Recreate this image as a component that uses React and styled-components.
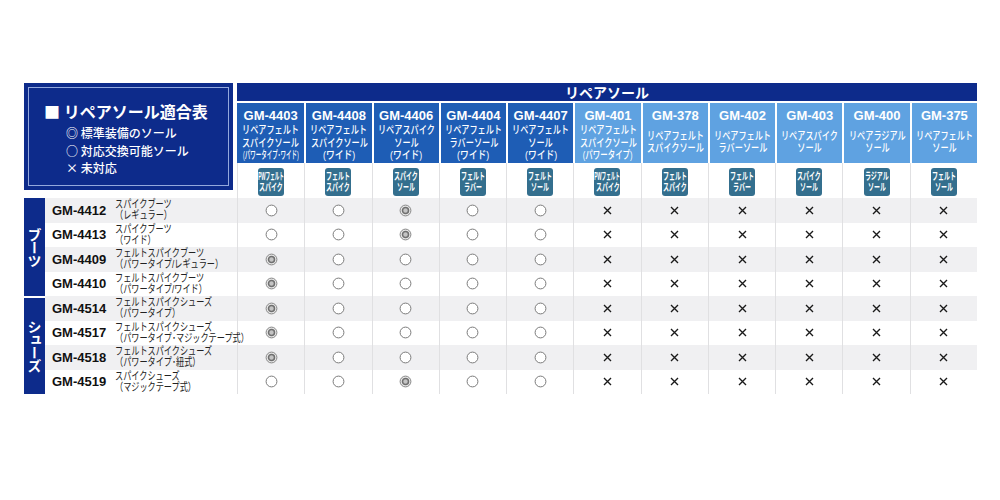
import React from "react";
import styled, { createGlobalStyle } from "styled-components";

const GlobalStyle = createGlobalStyle`
    body {
        margin: 0;
        background: white;
        font-family: "Liberation Sans", "Noto Sans CJK JP", sans-serif;
    }
`

const navy = "#0d2b8b";
const midBlue = "#1e5db5";
const lightBlue = "#5fa2e1";
const badgeColor = "#346f8e";
const rowGray = "#f0f0f2";
const lineGray = "#e0e0e2";

const Page = styled.div`
    padding: 83px 23px 0 24px;
`
const Table = styled.div`
    display: grid;
    width: 953px;
    grid-template-columns: 21px 192px repeat(11, 1fr);
    grid-template-rows: 20px 60px 35px repeat(8, 24.5px);
`
const Legend = styled.div`
    grid-column: 1 / 3;
    grid-row: 1 / 4;
    margin: 0 4px 8px 0;
    background: ${navy};
    padding: 4px;
    color: white;
`
const LegendInner = styled.div`
    height: 100%;
    box-sizing: border-box;
    border: 1px solid #93a8dc;
    padding: 13px 0 0 15px;
`
const LegendTitle = styled.div`
    font-family: "Noto Sans CJK JP", sans-serif;
    font-size: 16px;
    font-weight: 700;
    line-height: 20px;
    margin-bottom: 3px;
    white-space: nowrap;
`
const LegendItem = styled.div`
    font-family: "Noto Sans CJK JP", sans-serif;
    font-size: 12px;
    font-weight: 500;
    line-height: 17.5px;
    padding-left: 22px;
    white-space: nowrap;
`
const TopBar = styled.div`
    grid-column: 3 / -1;
    grid-row: 1;
    margin-bottom: 2px;
    background: ${navy};
    color: white;
    display: flex;
    align-items: center;
    justify-content: center;
    font-family: "Noto Sans CJK JP", sans-serif;
    font-size: 14px;
    font-weight: 700;
`
const HeadCell = styled.div`
    grid-row: 2;
    background: ${props => props.$light ? lightBlue : midBlue};
    border-left: ${props => props.$first ? "none" : "2px solid white"};
    color: white;
    display: flex;
    flex-direction: column;
    align-items: center;
    padding-top: 5px;
    box-sizing: border-box;
    overflow: hidden;
`
const Code = styled.div`
    font-size: 13px;
    font-weight: 700;
    line-height: 16px;
`
const SubBlock = styled.div`
    flex: 1;
    display: flex;
    flex-direction: column;
    align-items: center;
    justify-content: center;
    padding-bottom: 3px;
`
const SubLine = styled.span`
    display: block;
    font-family: "Liberation Sans", "Noto Sans CJK JP", sans-serif;
    font-size: 11px;
    font-weight: 500;
    line-height: 12.5px;
    white-space: nowrap;
    transform: scaleX(${props => props.$sx || 0.74});
`
const BadgeCell = styled.div`
    grid-row: 3;
    border-left: 1px solid ${lineGray};
    display: flex;
    align-items: center;
    justify-content: center;
    padding-top: 3px;
`
const Badge = styled.div`
    width: 26px;
    height: 28px;
    border-radius: 3px;
    background: ${badgeColor};
    color: white;
    display: flex;
    flex-direction: column;
    align-items: center;
    justify-content: center;
`
const BadgeLine = styled.span`
    display: block;
    font-family: "Liberation Sans", "Noto Sans CJK JP", sans-serif;
    font-size: 10px;
    font-weight: 700;
    line-height: 11.5px;
    white-space: nowrap;
    transform: scaleX(${props => props.$sx || 0.6});
`
const Category = styled.div`
    grid-column: 1;
    grid-row: ${props => props.$row} / span 4;
    margin-top: ${props => props.$gap ? "2px" : "0"};
    background: ${navy};
    color: white;
    display: flex;
    align-items: center;
    justify-content: center;
`
const CategoryText = styled.span`
    writing-mode: vertical-rl;
    text-orientation: upright;
    font-family: "Noto Sans CJK JP", sans-serif;
    font-size: 14px;
    font-weight: 700;
    line-height: 1;
    letter-spacing: -1px;
`
const ModelCell = styled.div`
    grid-column: 2;
    background: ${props => props.$odd ? rowGray : "white"};
    display: flex;
    align-items: center;
    padding-left: 7px;
`
const ModelCode = styled.span`
    width: 63px;
    flex-shrink: 0;
    font-size: 13px;
    font-weight: 700;
    color: #111;
`
const ModelDesc = styled.div`
    display: flex;
    flex-direction: column;
    color: #222;
`
const DescLine = styled.span`
    display: block;
    font-family: "Liberation Sans", "Noto Sans CJK JP", sans-serif;
    font-size: 11px;
    line-height: 11px;
    white-space: nowrap;
    transform: scaleX(0.74);
    transform-origin: left center;
`
const Cell = styled.div`
    background: ${props => props.$odd ? rowGray : "white"};
    border-left: 1px solid ${lineGray};
    display: flex;
    align-items: center;
    justify-content: center;
`

const Ring = () => (
    <svg width="13" height="13" viewBox="0 0 13 13">
        <circle cx="6.5" cy="6.5" r="5.4" fill="white" stroke="#7c7c7c" strokeWidth="1" />
    </svg>
);

const DoubleRing = () => (
    <svg width="13" height="13" viewBox="0 0 13 13">
        <circle cx="6.5" cy="6.5" r="5.4" fill="#e6e6e6" stroke="#888" strokeWidth="1" />
        <circle cx="6.5" cy="6.5" r="3" fill="#c4c4c4" stroke="#6f6f6f" strokeWidth="1.5" />
    </svg>
);

const Cross = () => (
    <svg width="13" height="13" viewBox="0 0 13 13">
        <path d="M3 3 L10 10 M10 3 L3 10" stroke="#1a1a1a" strokeWidth="1.35" />
    </svg>
);

const columns = [
    { code: "GM-4403", lines: [["リペアフェルト"], ["スパイクソール"], ["(パワータイプ･ワイド)", 0.5]], badge: [["PWフェルト", 0.46], ["スパイク"]] },
    { code: "GM-4408", lines: [["リペアフェルト"], ["スパイクソール"], ["(ワイド)", 0.8]], badge: [["フェルト"], ["スパイク"]] },
    { code: "GM-4406", lines: [["リペアスパイク"], ["ソール"], ["(ワイド)", 0.8]], badge: [["スパイク"], ["ソール"]] },
    { code: "GM-4404", lines: [["リペアフェルト"], ["ラバーソール"], ["(ワイド)", 0.8]], badge: [["フェルト"], ["ラバー"]] },
    { code: "GM-4407", lines: [["リペアフェルト"], ["ソール"], ["(ワイド)", 0.8]], badge: [["フェルト"], ["ソール"]] },
    { code: "GM-401", light: true, lines: [["リペアフェルト"], ["スパイクソール"], ["(パワータイプ)", 0.68]], badge: [["PWフェルト", 0.46], ["スパイク"]] },
    { code: "GM-378", light: true, lines: [["リペアフェルト"], ["スパイクソール"]], badge: [["フェルト"], ["スパイク"]] },
    { code: "GM-402", light: true, lines: [["リペアフェルト"], ["ラバーソール"]], badge: [["フェルト"], ["ラバー"]] },
    { code: "GM-403", light: true, lines: [["リペアスパイク"], ["ソール"]], badge: [["スパイク"], ["ソール"]] },
    { code: "GM-400", light: true, lines: [["リペアラジアル"], ["ソール"]], badge: [["ラジアル"], ["ソール"]] },
    { code: "GM-375", light: true, lines: [["リペアフェルト"], ["ソール"]], badge: [["フェルト"], ["ソール"]] },
];

// o = 対応, d = 標準装備, x = 未対応
const rows = [
    { code: "GM-4412", desc: ["スパイクブーツ", "（レギュラー）"], marks: "oodooxxxxxx" },
    { code: "GM-4413", desc: ["スパイクブーツ", "（ワイド）"], marks: "oodooxxxxxx" },
    { code: "GM-4409", desc: ["フェルトスパイクブーツ", "（パワータイプ/レギュラー）"], marks: "dooooxxxxxx" },
    { code: "GM-4410", desc: ["フェルトスパイクブーツ", "（パワータイプ/ワイド）"], marks: "dooooxxxxxx" },
    { code: "GM-4514", desc: ["フェルトスパイクシューズ", "（パワータイプ）"], marks: "dooooxxxxxx" },
    { code: "GM-4517", desc: ["フェルトスパイクシューズ", "（パワータイプ･マジックテープ式）"], marks: "dooooxxxxxx" },
    { code: "GM-4518", desc: ["フェルトスパイクシューズ", "（パワータイプ･紐式）"], marks: "dooooxxxxxx" },
    { code: "GM-4519", desc: ["スパイクシューズ", "（マジックテープ式）"], marks: "oodooxxxxxx" },
];

const Mark = ({ type }) => {
    if (type === "d") return <DoubleRing />;
    if (type === "o") return <Ring />;
    return <Cross />;
};

const App = () => {
    return (
        <Page>
            <GlobalStyle />
            <Table>
                <Legend>
                    <LegendInner>
                        <LegendTitle>■ リペアソール適合表</LegendTitle>
                        <LegendItem>◎ 標準装備のソール</LegendItem>
                        <LegendItem>○ 対応交換可能ソール</LegendItem>
                        <LegendItem>× 未対応</LegendItem>
                    </LegendInner>
                </Legend>

                <TopBar>リペアソール</TopBar>

                {columns.map((col, i) => (
                    <HeadCell key={col.code} $light={col.light} $first={i === 0} style={{ gridColumn: i + 3 }}>
                        <Code>{col.code}</Code>
                        <SubBlock>
                            {col.lines.map(([text, sx]) => (
                                <SubLine key={text} $sx={sx}>{text}</SubLine>
                            ))}
                        </SubBlock>
                    </HeadCell>
                ))}

                {columns.map((col, i) => (
                    <BadgeCell key={col.code} style={{ gridColumn: i + 3 }}>
                        <Badge>
                            {col.badge.map(([text, sx]) => (
                                <BadgeLine key={text} $sx={sx}>{text}</BadgeLine>
                            ))}
                        </Badge>
                    </BadgeCell>
                ))}

                <Category $row={4}><CategoryText>ブーツ</CategoryText></Category>
                <Category $row={8} $gap><CategoryText>シューズ</CategoryText></Category>

                {rows.map((row, r) => (
                    <React.Fragment key={row.code}>
                        <ModelCell $odd={r % 2 === 0} style={{ gridRow: r + 4 }}>
                            <ModelCode>{row.code}</ModelCode>
                            <ModelDesc>
                                {row.desc.map(line => <DescLine key={line}>{line}</DescLine>)}
                            </ModelDesc>
                        </ModelCell>
                        {row.marks.split("").map((m, c) => (
                            <Cell key={c} $odd={r % 2 === 0} style={{ gridRow: r + 4, gridColumn: c + 3 }}>
                                <Mark type={m} />
                            </Cell>
                        ))}
                    </React.Fragment>
                ))}
            </Table>
        </Page>
    );
}

export default App;
